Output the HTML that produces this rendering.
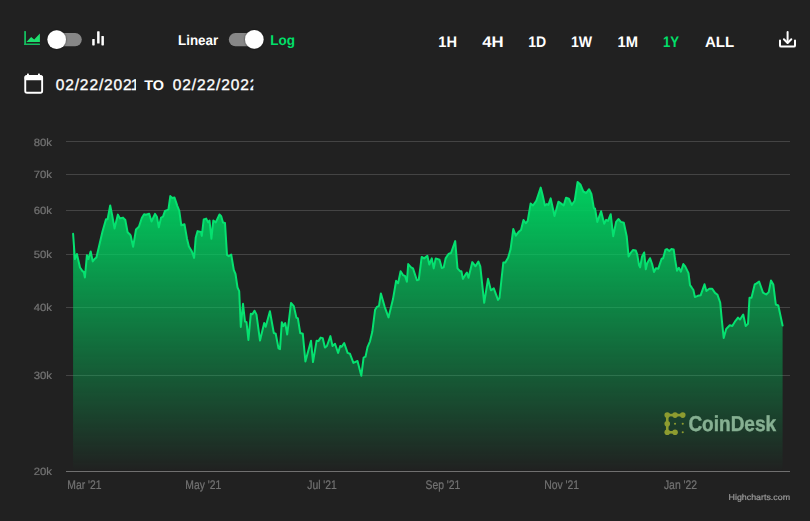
<!DOCTYPE html>
<html><head><meta charset="utf-8">
<style>
html,body{margin:0;padding:0;}
body{width:810px;height:521px;overflow:hidden;background:#212121;font-family:"Liberation Sans",sans-serif;position:relative;}
svg{position:absolute;left:0;top:0;}
</style></head>
<body>
<svg width="810" height="521" viewBox="0 0 810 521" font-family="Liberation Sans, sans-serif" text-rendering="geometricPrecision">
<defs>
<filter id="sh" x="-50%" y="-50%" width="200%" height="200%"><feDropShadow dx="0" dy="0" stdDeviation="1" flood-color="#000" flood-opacity="0.6"/></filter>
</defs>
<!-- header row -->
<!-- area icon -->
<g fill="#14bd5e">
<rect x="24.2" y="31.1" width="1.8" height="14" rx="0.5"/>
<rect x="24.2" y="43.6" width="15.8" height="1.5" rx="0.5"/>
</g>
<path d="M26.4 42 L31.15 36.9 L34.2 39.5 L39.9 33.6 L39.9 42 Z" fill="#1ee06e"/>
<!-- toggle 1 -->
<rect x="50.5" y="33" width="31.3" height="13.2" rx="6.6" fill="#878787"/>
<circle cx="56.7" cy="39.6" r="9.3" fill="#fff" filter="url(#sh)"/>
<!-- bar icon -->
<g fill="#fff">
<rect x="92.2" y="39" width="2.5" height="6.4" rx="0.6"/>
<rect x="97.1" y="31.2" width="2.5" height="12.3" rx="0.6"/>
<rect x="101.4" y="36" width="2.5" height="9.4" rx="0.6"/>
</g>
<text x="178.02" y="44.85" font-size="14.130" textLength="40.09" lengthAdjust="spacingAndGlyphs" font-weight="bold" fill="#fff" >Linear</text>
<rect x="228.8" y="33" width="31.5" height="13.2" rx="6.6" fill="#878787"/>
<circle cx="254.3" cy="39.4" r="9.3" fill="#fff" filter="url(#sh)"/>
<text x="270.26" y="44.85" font-size="14.130" textLength="24.67" lengthAdjust="spacingAndGlyphs" font-weight="bold" fill="#00e06a" >Log</text>
<text x="438.27" y="46.75" font-size="15.360" textLength="18.68" lengthAdjust="spacingAndGlyphs" font-weight="bold" fill="#fff" >1H</text>
<text x="482.15" y="46.75" font-size="15.360" textLength="21.38" lengthAdjust="spacingAndGlyphs" font-weight="bold" fill="#fff" >4H</text>
<text x="528.21" y="46.75" font-size="15.360" textLength="17.94" lengthAdjust="spacingAndGlyphs" font-weight="bold" fill="#fff" >1D</text>
<text x="570.91" y="46.75" font-size="15.360" textLength="21.11" lengthAdjust="spacingAndGlyphs" font-weight="bold" fill="#fff" >1W</text>
<text x="617.44" y="46.75" font-size="15.360" textLength="20.49" lengthAdjust="spacingAndGlyphs" font-weight="bold" fill="#fff" >1M</text>
<text x="663.02" y="46.75" font-size="15.360" textLength="16.14" lengthAdjust="spacingAndGlyphs" font-weight="bold" fill="#00e06a" >1Y</text>
<text x="704.90" y="46.65" font-size="15.070" textLength="29.16" lengthAdjust="spacingAndGlyphs" font-weight="bold" fill="#fff" >ALL</text>
<!-- download icon -->
<g fill="none" stroke="#fff" stroke-width="2" stroke-linecap="round" stroke-linejoin="round">
<path d="M787.6 32 V42.6"/>
<path d="M783.9 39.3 L787.6 43 L791.3 39.3"/>
<path d="M780 40.6 V45.4 Q780 46.6 781.2 46.6 H793.8 Q795 46.6 795 45.4 V40.6"/>
</g>
<!-- calendar icon -->
<rect x="25.25" y="76.05" width="16.9" height="16.65" rx="1.8" fill="none" stroke="#fff" stroke-width="1.9"/>
<rect x="24.6" y="75.4" width="18.2" height="4.9" rx="1.5" fill="#fff"/>
<rect x="27" y="73.5" width="1.9" height="3" rx="0.6" fill="#fff"/>
<rect x="38" y="73.5" width="1.9" height="3" rx="0.6" fill="#fff"/>
<defs><clipPath id="c1"><rect x="55" y="65" width="81.1" height="35"/></clipPath>
<clipPath id="c2"><rect x="172.3" y="65" width="81" height="35"/></clipPath></defs>
<g clip-path="url(#c1)"><text x="55.66" y="89.85" font-size="15.5" letter-spacing="0.89" fill="#fff" stroke="#fff" stroke-width="0.35">02/22/202<tspan dx="-2.0">1</tspan></text></g>
<text x="144.26" y="89.75" font-size="13.910" textLength="19.78" lengthAdjust="spacingAndGlyphs" font-weight="bold" fill="#fff" >TO</text>
<g clip-path="url(#c2)"><text x="172.83" y="89.85" font-size="15.5" letter-spacing="0.89" fill="#fff" stroke="#fff" stroke-width="0.35">02/22/2022</text></g>

</svg>
<svg width="810" height="521" viewBox="0 0 810 521" font-family="Liberation Sans, sans-serif" text-rendering="geometricPrecision" style="will-change:transform">
<defs>
<linearGradient id="g" x1="0" y1="0" x2="0" y2="1">
<stop offset="0" stop-color="#00d060" stop-opacity="1"/>
<stop offset="1" stop-color="#00d060" stop-opacity="0"/>
</linearGradient>
</defs>
<!-- chart area -->
<g stroke="#ffffff" stroke-opacity="0.16" stroke-width="1">
<path d="M66 141.5 H790 M66 174.5 H790 M66 210.5 H790 M66 254.5 H790 M66 307.5 H790 M66 375.5 H790"/>
</g>
<path d="M73.1 233.8 L74.9 259.1 L76.9 254.0 L80.0 267.5 L82.3 270.9 L83.8 272.1 L84.9 277.5 L86.9 255.2 L88.4 259.1 L90.7 251.4 L92.7 261.4 L94.5 259.1 L96.4 257.5 L99.1 246.0 L102.5 231.5 L106.0 219.2 L107.6 219.2 L110.2 205.4 L112.2 215.4 L114.5 228.4 L117.9 214.6 L119.9 218.4 L123.0 217.6 L125.3 220.0 L127.6 232.2 L130.2 234.8 L130.6 235.3 L133.1 246.8 L136.0 229.5 L138.9 226.7 L141.8 218.0 L144.1 214.2 L145.8 214.8 L149.2 213.8 L151.5 221.5 L155.0 213.8 L156.9 216.7 L158.8 227.2 L161.1 217.6 L163.0 216.7 L165.0 210.9 L168.4 209.6 L170.3 196.1 L172.2 198.0 L174.5 197.5 L177.4 206.1 L179.3 210.9 L181.3 225.3 L184.5 224.3 L187.0 238.7 L188.9 246.4 L191.8 251.2 L194.1 257.9 L195.7 237.8 L197.6 231.1 L201.0 232.0 L201.8 235.9 L203.7 219.5 L206.2 218.6 L208.1 222.4 L209.5 220.5 L211.4 238.7 L213.3 220.5 L215.8 222.4 L217.5 218.8 L219.5 214.5 L221.2 216.2 L223.0 222.5 L225.0 223.0 L227.0 255.0 L228.8 256.2 L231.2 254.5 L233.8 270.0 L235.5 273.8 L237.5 287.5 L239.2 291.2 L240.8 327.0 L243.0 303.8 L245.0 321.5 L246.5 322.2 L248.4 339.9 L250.8 313.8 L252.4 314.2 L254.5 310.7 L256.5 314.6 L260.0 340.6 L264.2 323.0 L265.7 326.8 L269.9 311.2 L273.8 333.0 L275.7 333.7 L278.5 348.3 L280.0 349.1 L281.8 322.2 L283.4 326.1 L285.2 323.0 L287.2 334.5 L291.0 303.0 L293.8 306.1 L296.4 317.6 L297.9 318.4 L300.2 333.0 L302.8 333.8 L305.4 361.4 L311.0 340.7 L313.0 362.1 L316.6 340.7 L318.4 341.1 L320.7 337.6 L322.7 338.1 L324.9 347.6 L326.9 346.0 L330.4 336.1 L332.5 346.0 L335.0 343.7 L338.1 352.9 L340.2 346.0 L341.7 346.8 L344.2 343.0 L347.6 352.9 L349.9 353.7 L353.4 362.9 L357.5 361.0 L361.3 375.8 L363.6 357.6 L365.5 356.7 L367.5 347.1 L370.0 341.3 L372.3 331.8 L375.1 309.7 L377.0 306.8 L379.0 305.9 L380.9 293.4 L384.7 306.8 L388.5 317.4 L393.0 299.1 L396.1 280.8 L398.1 283.3 L400.6 271.2 L403.0 275.1 L405.0 276.0 L406.9 281.8 L408.2 264.1 L411.1 267.4 L413.0 268.4 L416.9 280.3 L418.8 279.5 L421.7 256.9 L424.1 258.4 L427.4 255.9 L429.3 264.5 L431.8 258.4 L433.7 268.4 L435.7 258.4 L439.5 259.7 L441.8 268.0 L443.7 267.4 L445.6 258.4 L448.5 254.0 L451.0 253.0 L455.2 241.1 L457.5 268.4 L460.0 271.2 L461.4 271.2 L462.9 278.9 L465.8 274.1 L466.9 272.5 L468.5 277.8 L472.3 262.1 L475.5 266.3 L478.4 261.5 L480.3 266.3 L484.2 302.8 L488.0 278.8 L490.9 290.3 L493.8 288.4 L498.0 299.9 L499.5 298.0 L503.3 262.5 L505.3 262.5 L508.1 257.7 L510.6 249.1 L513.3 229.0 L515.8 235.7 L518.7 231.8 L521.0 229.9 L523.5 220.0 L525.8 223.3 L527.7 220.8 L530.6 203.6 L533.0 205.5 L536.3 200.7 L540.7 187.6 L542.6 194.9 L544.9 205.5 L546.9 204.1 L548.4 204.9 L550.7 198.4 L554.5 216.0 L558.4 201.7 L561.2 203.6 L563.7 205.5 L566.0 197.8 L568.9 198.8 L571.8 204.9 L574.7 200.7 L577.6 181.9 L580.4 184.4 L583.3 191.5 L586.2 193.0 L589.1 189.2 L591.4 194.0 L593.9 208.4 L595.0 208.4 L597.3 221.9 L601.1 211.3 L604.2 223.8 L606.1 219.9 L608.0 220.9 L610.7 214.2 L613.2 236.2 L616.1 221.9 L618.4 219.0 L620.9 221.9 L623.8 222.8 L626.7 236.2 L628.6 256.4 L631.0 252.5 L632.9 250.1 L635.8 250.6 L637.2 254.4 L639.1 265.4 L640.1 267.4 L642.0 256.8 L644.2 252.5 L645.8 269.3 L647.3 263.0 L650.0 258.2 L652.1 264.0 L654.0 272.1 L655.9 268.3 L658.3 268.8 L659.8 264.0 L661.7 258.7 L663.1 258.2 L665.5 249.6 L666.9 249.1 L669.3 251.0 L671.3 249.1 L673.7 249.6 L675.1 259.7 L677.0 270.7 L678.9 267.8 L680.9 271.7 L683.3 264.0 L685.2 266.4 L688.5 273.1 L690.0 285.1 L691.5 287.2 L693.4 290.0 L694.9 297.1 L697.8 295.8 L700.7 295.2 L704.5 284.3 L706.4 291.0 L709.3 288.7 L712.2 288.7 L715.0 292.9 L717.5 294.8 L720.2 302.5 L721.8 319.8 L723.7 338.0 L726.2 329.0 L729.8 325.2 L732.3 326.0 L735.5 320.8 L738.0 317.6 L740.0 319.5 L743.2 314.5 L745.7 326.0 L748.0 323.7 L749.5 297.8 L751.5 297.8 L754.7 284.4 L756.6 283.4 L759.1 281.5 L763.0 292.6 L766.2 294.5 L768.7 292.1 L771.0 280.5 L773.3 284.4 L775.8 304.5 L778.3 305.5 L782.6 325.6 L782.6 471.5 L73.1 471.5 Z" fill="url(#g)" stroke="none"/>
<path d="M66 471.5 H790" stroke="#707070" stroke-width="1"/>
<path d="M73.1 233.8 L74.9 259.1 L76.9 254.0 L80.0 267.5 L82.3 270.9 L83.8 272.1 L84.9 277.5 L86.9 255.2 L88.4 259.1 L90.7 251.4 L92.7 261.4 L94.5 259.1 L96.4 257.5 L99.1 246.0 L102.5 231.5 L106.0 219.2 L107.6 219.2 L110.2 205.4 L112.2 215.4 L114.5 228.4 L117.9 214.6 L119.9 218.4 L123.0 217.6 L125.3 220.0 L127.6 232.2 L130.2 234.8 L130.6 235.3 L133.1 246.8 L136.0 229.5 L138.9 226.7 L141.8 218.0 L144.1 214.2 L145.8 214.8 L149.2 213.8 L151.5 221.5 L155.0 213.8 L156.9 216.7 L158.8 227.2 L161.1 217.6 L163.0 216.7 L165.0 210.9 L168.4 209.6 L170.3 196.1 L172.2 198.0 L174.5 197.5 L177.4 206.1 L179.3 210.9 L181.3 225.3 L184.5 224.3 L187.0 238.7 L188.9 246.4 L191.8 251.2 L194.1 257.9 L195.7 237.8 L197.6 231.1 L201.0 232.0 L201.8 235.9 L203.7 219.5 L206.2 218.6 L208.1 222.4 L209.5 220.5 L211.4 238.7 L213.3 220.5 L215.8 222.4 L217.5 218.8 L219.5 214.5 L221.2 216.2 L223.0 222.5 L225.0 223.0 L227.0 255.0 L228.8 256.2 L231.2 254.5 L233.8 270.0 L235.5 273.8 L237.5 287.5 L239.2 291.2 L240.8 327.0 L243.0 303.8 L245.0 321.5 L246.5 322.2 L248.4 339.9 L250.8 313.8 L252.4 314.2 L254.5 310.7 L256.5 314.6 L260.0 340.6 L264.2 323.0 L265.7 326.8 L269.9 311.2 L273.8 333.0 L275.7 333.7 L278.5 348.3 L280.0 349.1 L281.8 322.2 L283.4 326.1 L285.2 323.0 L287.2 334.5 L291.0 303.0 L293.8 306.1 L296.4 317.6 L297.9 318.4 L300.2 333.0 L302.8 333.8 L305.4 361.4 L311.0 340.7 L313.0 362.1 L316.6 340.7 L318.4 341.1 L320.7 337.6 L322.7 338.1 L324.9 347.6 L326.9 346.0 L330.4 336.1 L332.5 346.0 L335.0 343.7 L338.1 352.9 L340.2 346.0 L341.7 346.8 L344.2 343.0 L347.6 352.9 L349.9 353.7 L353.4 362.9 L357.5 361.0 L361.3 375.8 L363.6 357.6 L365.5 356.7 L367.5 347.1 L370.0 341.3 L372.3 331.8 L375.1 309.7 L377.0 306.8 L379.0 305.9 L380.9 293.4 L384.7 306.8 L388.5 317.4 L393.0 299.1 L396.1 280.8 L398.1 283.3 L400.6 271.2 L403.0 275.1 L405.0 276.0 L406.9 281.8 L408.2 264.1 L411.1 267.4 L413.0 268.4 L416.9 280.3 L418.8 279.5 L421.7 256.9 L424.1 258.4 L427.4 255.9 L429.3 264.5 L431.8 258.4 L433.7 268.4 L435.7 258.4 L439.5 259.7 L441.8 268.0 L443.7 267.4 L445.6 258.4 L448.5 254.0 L451.0 253.0 L455.2 241.1 L457.5 268.4 L460.0 271.2 L461.4 271.2 L462.9 278.9 L465.8 274.1 L466.9 272.5 L468.5 277.8 L472.3 262.1 L475.5 266.3 L478.4 261.5 L480.3 266.3 L484.2 302.8 L488.0 278.8 L490.9 290.3 L493.8 288.4 L498.0 299.9 L499.5 298.0 L503.3 262.5 L505.3 262.5 L508.1 257.7 L510.6 249.1 L513.3 229.0 L515.8 235.7 L518.7 231.8 L521.0 229.9 L523.5 220.0 L525.8 223.3 L527.7 220.8 L530.6 203.6 L533.0 205.5 L536.3 200.7 L540.7 187.6 L542.6 194.9 L544.9 205.5 L546.9 204.1 L548.4 204.9 L550.7 198.4 L554.5 216.0 L558.4 201.7 L561.2 203.6 L563.7 205.5 L566.0 197.8 L568.9 198.8 L571.8 204.9 L574.7 200.7 L577.6 181.9 L580.4 184.4 L583.3 191.5 L586.2 193.0 L589.1 189.2 L591.4 194.0 L593.9 208.4 L595.0 208.4 L597.3 221.9 L601.1 211.3 L604.2 223.8 L606.1 219.9 L608.0 220.9 L610.7 214.2 L613.2 236.2 L616.1 221.9 L618.4 219.0 L620.9 221.9 L623.8 222.8 L626.7 236.2 L628.6 256.4 L631.0 252.5 L632.9 250.1 L635.8 250.6 L637.2 254.4 L639.1 265.4 L640.1 267.4 L642.0 256.8 L644.2 252.5 L645.8 269.3 L647.3 263.0 L650.0 258.2 L652.1 264.0 L654.0 272.1 L655.9 268.3 L658.3 268.8 L659.8 264.0 L661.7 258.7 L663.1 258.2 L665.5 249.6 L666.9 249.1 L669.3 251.0 L671.3 249.1 L673.7 249.6 L675.1 259.7 L677.0 270.7 L678.9 267.8 L680.9 271.7 L683.3 264.0 L685.2 266.4 L688.5 273.1 L690.0 285.1 L691.5 287.2 L693.4 290.0 L694.9 297.1 L697.8 295.8 L700.7 295.2 L704.5 284.3 L706.4 291.0 L709.3 288.7 L712.2 288.7 L715.0 292.9 L717.5 294.8 L720.2 302.5 L721.8 319.8 L723.7 338.0 L726.2 329.0 L729.8 325.2 L732.3 326.0 L735.5 320.8 L738.0 317.6 L740.0 319.5 L743.2 314.5 L745.7 326.0 L748.0 323.7 L749.5 297.8 L751.5 297.8 L754.7 284.4 L756.6 283.4 L759.1 281.5 L763.0 292.6 L766.2 294.5 L768.7 292.1 L771.0 280.5 L773.3 284.4 L775.8 304.5 L778.3 305.5 L782.6 325.6" fill="none" stroke="#06e170" stroke-width="2" stroke-linejoin="round" stroke-linecap="round"/>
<text x="51.93" y="145.75" font-size="10.560" textLength="18.28" lengthAdjust="spacingAndGlyphs" text-anchor="end" fill="#727272" stroke="#727272" stroke-width="0.22">80k</text>
<text x="51.93" y="177.75" font-size="10.560" textLength="18.28" lengthAdjust="spacingAndGlyphs" text-anchor="end" fill="#727272" stroke="#727272" stroke-width="0.22">70k</text>
<text x="51.93" y="213.75" font-size="10.560" textLength="18.28" lengthAdjust="spacingAndGlyphs" text-anchor="end" fill="#727272" stroke="#727272" stroke-width="0.22">60k</text>
<text x="51.93" y="257.75" font-size="10.560" textLength="18.28" lengthAdjust="spacingAndGlyphs" text-anchor="end" fill="#727272" stroke="#727272" stroke-width="0.22">50k</text>
<text x="51.93" y="310.75" font-size="10.560" textLength="18.28" lengthAdjust="spacingAndGlyphs" text-anchor="end" fill="#727272" stroke="#727272" stroke-width="0.22">40k</text>
<text x="51.93" y="378.75" font-size="10.560" textLength="18.28" lengthAdjust="spacingAndGlyphs" text-anchor="end" fill="#727272" stroke="#727272" stroke-width="0.22">30k</text>
<text x="51.93" y="474.55" font-size="10.560" textLength="18.28" lengthAdjust="spacingAndGlyphs" text-anchor="end" fill="#727272" stroke="#727272" stroke-width="0.22">20k</text>
<text x="84.45" y="488.85" font-size="12.460" textLength="34.29" lengthAdjust="spacingAndGlyphs" text-anchor="middle" fill="#727272" stroke="#727272" stroke-width="0.22">Mar '21</text>
<text x="203.30" y="488.85" font-size="12.460" textLength="36.02" lengthAdjust="spacingAndGlyphs" text-anchor="middle" fill="#727272" stroke="#727272" stroke-width="0.22">May '21</text>
<text x="322.05" y="488.85" font-size="12.460" textLength="29.68" lengthAdjust="spacingAndGlyphs" text-anchor="middle" fill="#727272" stroke="#727272" stroke-width="0.22">Jul '21</text>
<text x="442.90" y="488.85" font-size="12.460" textLength="34.88" lengthAdjust="spacingAndGlyphs" text-anchor="middle" fill="#727272" stroke="#727272" stroke-width="0.22">Sep '21</text>
<text x="561.65" y="488.85" font-size="12.460" textLength="34.87" lengthAdjust="spacingAndGlyphs" text-anchor="middle" fill="#727272" stroke="#727272" stroke-width="0.22">Nov '21</text>
<text x="680.50" y="488.85" font-size="12.460" textLength="33.15" lengthAdjust="spacingAndGlyphs" text-anchor="middle" fill="#727272" stroke="#727272" stroke-width="0.22">Jan '22</text>
<text x="728.54" y="500.25" font-size="8.410" textLength="61.48" lengthAdjust="spacingAndGlyphs" font-weight="normal" fill="#9a9a9a" stroke="#9a9a9a" stroke-width="0.2">Highcharts.com</text>
<!-- coindesk watermark -->
<g fill="#8d9c30">
<circle cx="667.25" cy="415.1" r="2.8"/><circle cx="675.05" cy="415.1" r="2.8"/><circle cx="682.75" cy="415.1" r="2.8"/>
<circle cx="667.25" cy="423.7" r="2.8"/>
<circle cx="667.25" cy="432.3" r="2.8"/><circle cx="675.05" cy="432.3" r="2.8"/>
<rect x="667.25" y="413.8" width="15.5" height="2.6"/>
<rect x="665.95" y="415.1" width="2.6" height="17.2"/>
<rect x="667.25" y="431.0" width="7.8" height="2.6"/>
<circle cx="675.05" cy="423.7" r="1.05"/><circle cx="682.75" cy="423.7" r="1.05"/><circle cx="682.75" cy="432.3" r="1.05"/>
</g>
<text x="688.39" y="431.35" font-size="21.590" textLength="87.73" lengthAdjust="spacingAndGlyphs" font-weight="bold" fill="#86b092" stroke="#86b092" stroke-width="0.45">CoinDesk</text>
</svg>
</body></html>
